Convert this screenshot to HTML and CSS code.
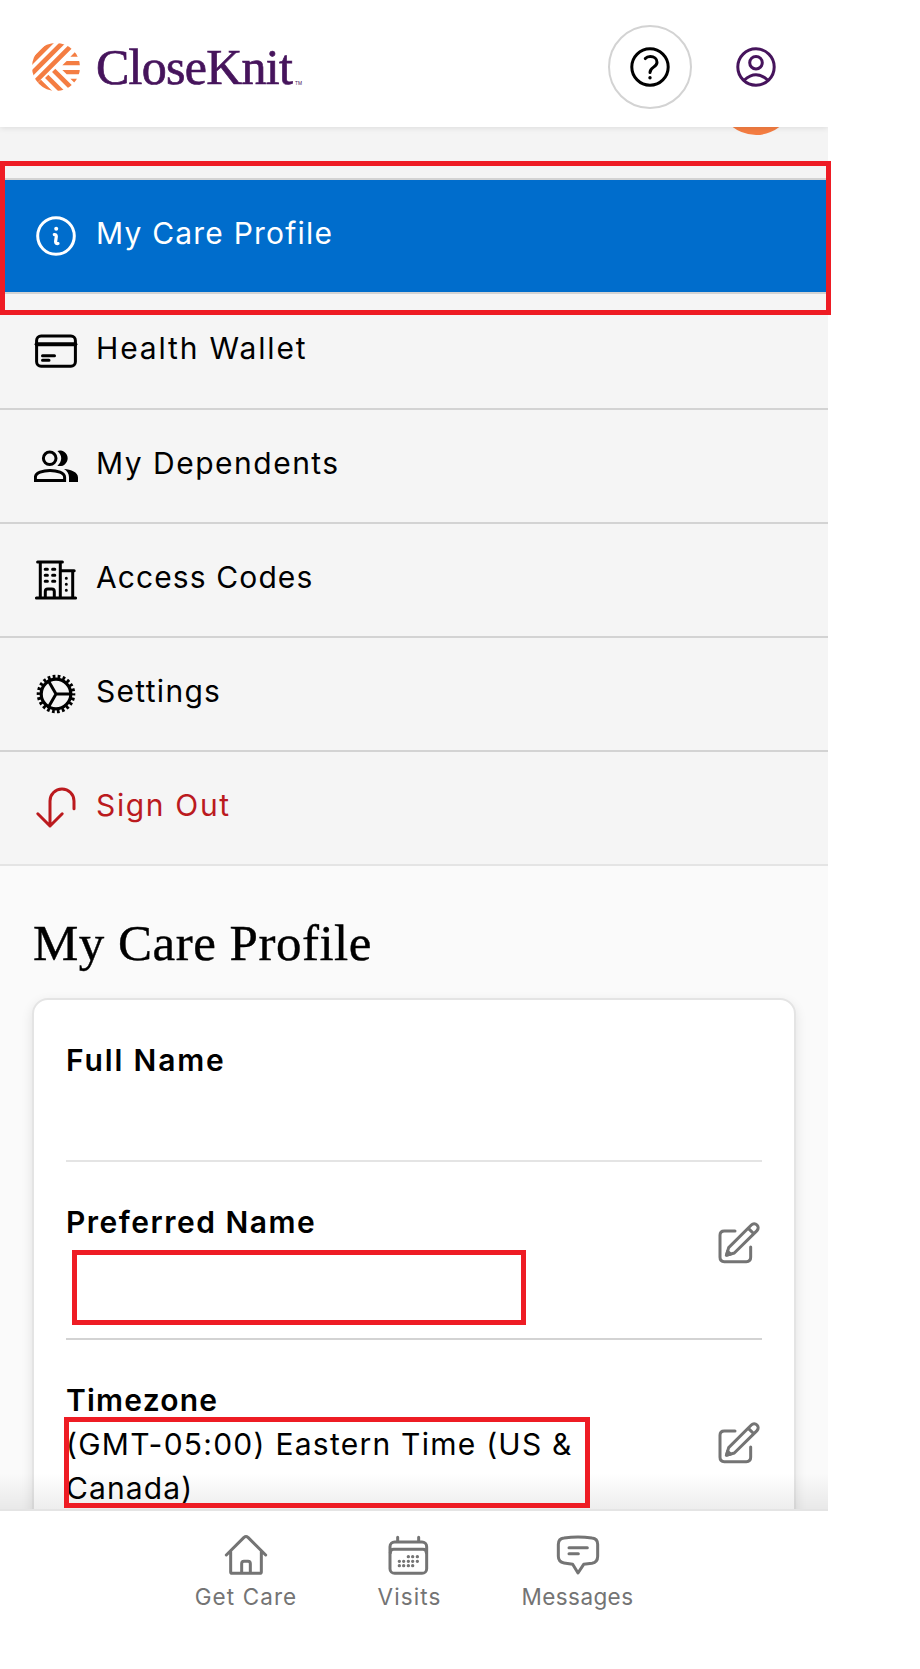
FILE: index.html
```html
<!DOCTYPE html>
<html lang="en">

<head>
  <meta charset="UTF-8">
  <meta name="viewport" content="width=device-width, initial-scale=1.0">
  <title>My Care Profile</title>
  <link rel="stylesheet" href="styles.css">
</head>

<body>
  <div class="app">
    <header class="header">
      <svg class="logoMark" viewBox="6 6 144 144">
        <clipPath id="ball"><circle cx="78" cy="78" r="72" /></clipPath>
        <g clip-path="url(#ball)">
          <path d="M0 68 L68 0 M0 103 L103 0 M8 130 L128 10 M71 88 L130 147 M50 106 L100 156 M28 121 L66 159" fill="none"
            stroke="#f47d42" stroke-width="14" />
          <path d="M97 73 L110 60 H152 V73z M97 87 H152 V100 H110z M121 47 L135 33 L152 47z M121 113 H152 L135 127z"
            fill="#f47d42" />
        </g>
      </svg>
      <div class="logoText">CloseKnit</div>
      <span class="logoTm">TM</span>
      <button class="helpBtn">
        <svg class="headerIcon" viewBox="0 0 40 40">
          <circle cx="20" cy="20" r="18.2" />
          <path d="M15.3 11.6C16.7 10 18.5 9.6 20.3 9.6C24.2 9.6 27 12 27 15.2C27 20.5 20 19.8 20 25.5" />
          <circle class="solid" cx="20" cy="30.7" r="1.7" />
        </svg>
      </button>
      <button class="userBtn">
        <svg class="headerIcon" viewBox="0 0 40 40">
          <circle cx="20" cy="20" r="18.2" />
          <circle cx="20" cy="15.7" r="6.3" />
          <path d="M8.3 33Q20 22.5 31.7 33" />
        </svg>
      </button>
    </header>

    <div class="avatarStrip">
      <div class="avatar"></div>
    </div>

    <nav class="menu">
      <a class="menuItem active">
        <svg class="menuIcon" viewBox="0 0 44 44">
          <circle cx="22" cy="22" r="18.3" />
          <circle class="solid" cx="22.2" cy="14.7" r="2" />
          <path class="thick" d="M20.3 20.6Q22.3 20.3 22.3 22.5L21.6 27.5Q21.6 29.8 24 29.5" />
        </svg>
        <span class="menuText t1">My Care Profile</span>
      </a>
      <a class="menuItem wallet">
        <svg class="menuIcon" viewBox="0 0 44 44">
          <rect x="2.6" y="6.9" width="38.8" height="30.4" rx="4.5" />
          <path d="M2.6 15.3H41.4" stroke-width="4" />
          <path d="M8.5 26.7H20.5M8.5 31.2H15" />
        </svg>
        <span class="menuText t2">Health Wallet</span>
      </a>
      <a class="menuItem">
        <svg class="menuIcon" viewBox="0 0 44 44">
          <circle cx="15.7" cy="14.3" r="6.3" />
          <path d="M1.4 36.6V33.2C1.4 29 9 26.4 16 26.4S30.6 29 30.6 33.2V36.6Z" stroke-linejoin="miter" />
          <path class="solid" d="M23.4 6.9A7.8 7.8 0 1 1 23.4 21.7Q27.2 18.5 27.2 14.3T23.4 6.9Z" />
          <path class="solid" d="M30 25C37 25.5 44 28 44 33.5V38H35V33.3C35 29.8 33 26.8 30 25Z" />
        </svg>
        <span class="menuText t3">My Dependents</span>
      </a>
      <a class="menuItem">
        <svg class="menuIcon" viewBox="0 0 44 44">
          <path d="M3.6 4H28.4M6.3 4V40M26.3 4V40M2.4 40H41.6M26.3 12.7H40.2M38.7 12.7V40M11.3 40V33.4Q11.3 31 13.7 31H17.9Q20.3 31 20.3 33.4V40" />
          <path d="M11.2 11.3h2.2M18.6 11.3h2.2M11.2 17.3h2.2M18.6 17.3h2.2M11.2 23.3h2.2M18.6 23.3h2.2" />
          <path d="M32.3 20.3h.01M32.3 26.3h.01M32.3 32.3h.01" stroke-width="3" />
        </svg>
        <span class="menuText t4">Access Codes</span>
      </a>
      <a class="menuItem">
        <svg class="menuIcon" viewBox="0 0 44 44">
          <circle cx="22" cy="22" r="14.8" stroke-width="3.2" />
          <circle cx="22" cy="22" r="17.3" stroke-width="4" stroke-linecap="butt" stroke-dasharray="2.7 2.241" stroke-dashoffset="1.35" />
          <path d="M22 22H37M22 22L14.5 9M22 22L14.5 35" />
        </svg>
        <span class="menuText t5">Settings</span>
      </a>
      <a class="menuItem signOut">
        <svg class="menuIcon" viewBox="0 0 44 44">
          <path d="M3.8 27.8L16 40L28.2 27.8M16 40V15A12 12 0 0 1 40 15V22.7" />
        </svg>
        <span class="menuText t6">Sign Out</span>
      </a>
    </nav>

    <main class="content">
      <h1 class="heading">My Care Profile</h1>
      <div class="card">
        <div class="row">
          <div class="field">
            <div class="label l1">Full Name</div>
            <div class="value"></div>
          </div>
        </div>
        <div class="row preferred">
          <div class="field">
            <div class="label l2">Preferred Name</div>
            <div class="value"></div>
          </div>
          <svg class="editIcon" viewBox="350 122 132 132">
            <path d="M404 155H372Q359 155 359 168V234Q359 247 372 247H438Q451 247 451 234V203" />
            <path d="M378 228L385 205L453 137A12 12 0 0 1 470 154L402 221ZM444 147L460 163" />
            <path d="M379 227L382 216L391 224Z" />
          </svg>
        </div>
        <div class="row">
          <div class="field">
            <div class="label l3">Timezone</div>
            <div class="value"><span class="v1">(GMT-05:00) Eastern Time (US &amp;</span><br><span class="v2">Canada)</span></div>
          </div>
          <svg class="editIcon" viewBox="350 122 132 132">
            <path d="M404 155H372Q359 155 359 168V234Q359 247 372 247H438Q451 247 451 234V203" />
            <path d="M378 228L385 205L453 137A12 12 0 0 1 470 154L402 221ZM444 147L460 163" />
            <path d="M379 227L382 216L391 224Z" />
          </svg>
        </div>
      </div>
      <div class="fade"></div>
    </main>

    <nav class="tabBar">
      <a class="tab tabCare">
        <svg class="tabIcon" viewBox="192 98 132 132">
          <path d="M199 164L252 111Q258 106 264 111L317 164M212 152V215Q212 219 216 219H300Q304 219 304 215V152M245 219V190Q245 183 252 183H264Q271 183 271 190V219" />
        </svg>
        <span>Get Care</span>
      </a>
      <a class="tab tabVisits">
        <svg class="tabIcon" viewBox="683 98 132 132">
          <rect x="689" y="125" width="110" height="94" rx="14" />
          <path d="M690 157Q690 147 700 147H788Q798 147 798 157M712 111V122M775 111V122" />
          <path d="M744 169h.1M757 169h.1M771 169h.1M717 183h.1M730 183h.1M744 183h.1M757 183h.1M771 183h.1M717 196h.1M730 196h.1M744 196h.1M757 196h.1" stroke-width="10" />
        </svg>
        <span>Visits</span>
      </a>
      <a class="tab tabMessages">
        <svg class="tabIcon" viewBox="1188 98 132 132">
          <path d="M1195 132Q1195 115 1212 113Q1254 107 1296 113Q1313 115 1313 132V168Q1313 186 1296 189L1271 192L1254 218L1238 192L1212 188Q1195 185 1195 168Z" />
          <path d="M1227 142H1282M1227 160H1255" />
        </svg>
        <span>Messages</span>
      </a>
    </nav>

    <!-- highlight boxes drawn over the page -->
    <div class="mark markMenu"></div>
    <div class="mark markName"></div>
    <div class="mark markTimezone"></div>
  </div>
</body>

</html>
```
FILE: styles.css
```css
* {
  box-sizing: border-box;
}

body {
  margin: 0;
  background: #ffffff;
  font-family: Inter, "Liberation Sans", sans-serif;
  color: #000000;
}

.app {
  position: relative;
  width: 828px;
  height: 1669px;
  display: flex;
  flex-direction: column;
}

svg {
  display: block;
  flex: none;
  fill: none;
  stroke: currentColor;
  stroke-linecap: round;
  stroke-linejoin: round;
}

.solid {
  fill: currentColor;
  stroke: none;
}

/* header */
.header {
  position: relative;
  z-index: 1;
  height: 127px;
  flex: none;
  display: flex;
  align-items: center;
  padding: 7px 52px 0 32px;
  background: #ffffff;
  box-shadow: 0 1px 6px rgba(0, 0, 0, 0.1);
  clip-path: inset(0 0 -10px 0);
}

.logoMark {
  width: 48px;
  height: 48px;
  stroke: none;
  stroke-linecap: butt;
}

.logoText {
  margin-left: 16px;
  font-family: "Liberation Serif", serif;
  font-size: 50px;
  line-height: 56px;
  letter-spacing: -0.75px;
  color: #46145c;
  -webkit-text-stroke: 0.7px #46145c;
  white-space: nowrap;
}

.logoTm {
  margin: 32px 0 0 3px;
  font-size: 4.5px;
  line-height: 5px;
  color: #46145c;
}

.helpBtn {
  width: 84px;
  height: 84px;
  margin-left: auto;
  padding: 0;
  display: flex;
  align-items: center;
  justify-content: center;
  background: none;
  border: 2px solid #d3d3d3;
  border-radius: 50%;
  color: #000000;
}

.userBtn {
  margin-left: 44px;
  padding: 0;
  border: none;
  background: none;
  color: #46145c;
}

.headerIcon {
  width: 40px;
  height: 40px;
  stroke-width: 3;
}

/* menu */
.avatarStrip {
  height: 53px;
  flex: none;
  overflow: hidden;
  background: #f4f4f4;
  border-bottom: 2px solid #d3d3d3;
}

.avatar {
  width: 76px;
  height: 76px;
  margin: -68px 34px 0 auto;
  border-radius: 50%;
  background: #f47d42;
}

.menuItem {
  height: 114px;
  display: flex;
  align-items: center;
  gap: 18px;
  padding-left: 34px;
  background: #f5f5f5;
  border-bottom: 2px solid #d3d3d3;
}

.menuItem.active {
  background: #006dcc;
  color: #ffffff;
}

.menuItem.wallet {
  height: 116px;
}

.menuItem.signOut {
  color: #bb1a1e;
  border-bottom-color: #e4e4e4;
}

.menuIcon {
  width: 44px;
  height: 44px;
  stroke-width: 3;
}

.thick {
  stroke-width: 3.2;
}

.menuText {
  font-size: 30px;
  line-height: 44px;
  margin-top: -6px;
  white-space: nowrap;
}

.t1 {
  letter-spacing: 1.2px;
}

.t2 {
  letter-spacing: 1.85px;
}

.t3 {
  letter-spacing: 1.5px;
}

.t4 {
  letter-spacing: 1.1px;
}

.t5 {
  letter-spacing: 1.3px;
}

.t6 {
  letter-spacing: 1.65px;
}

/* profile */
.content {
  position: relative;
  height: 643px;
  flex: none;
  overflow: hidden;
  padding: 0 32px;
  background: #fafafa;
}

.heading {
  height: 132px;
  margin: 0;
  padding: 47px 0 0 1px;
  font-family: "Liberation Serif", serif;
  font-size: 51px;
  font-weight: 400;
  line-height: 60px;
  letter-spacing: 0.5px;
  -webkit-text-stroke: 0.4px #000000;
  white-space: nowrap;
}

.card {
  padding: 0 32px;
  background: #ffffff;
  border: 2px solid #e4e4e4;
  border-radius: 16px;
  box-shadow: 0 4px 12px rgba(0, 0, 0, 0.1);
}

.row {
  display: flex;
  align-items: center;
  justify-content: space-between;
  padding: 38px 1px 34px 0;
  border-bottom: 2px solid #e4e4e4;
}

.row.preferred {
  padding-bottom: 50px;
  border-bottom-color: #d3d3d3;
}

.label,
.value {
  min-height: 44px;
  font-size: 30px;
  line-height: 44px;
  white-space: nowrap;
}

.label {
  font-weight: 600;
}

.l1 {
  letter-spacing: 1.85px;
}

.l2 {
  letter-spacing: 1.5px;
}

.l3 {
  letter-spacing: 1.2px;
}

.v1 {
  letter-spacing: 1.25px;
}

.v2 {
  letter-spacing: 1.1px;
}

.editIcon {
  width: 44px;
  height: 44px;
  margin-top: -4px;
  color: #747474;
  stroke-width: 9;
}

/* shade above the tab bar */
.fade {
  position: absolute;
  left: 0;
  right: 0;
  bottom: 0;
  height: 36px;
  background: linear-gradient(rgba(0, 0, 0, 0), rgba(0, 0, 0, 0.07));
}

/* tab bar */
.tabBar {
  flex: 1;
  display: flex;
  justify-content: center;
  gap: 82px;
  padding-top: 22px;
  border-top: 2px solid #e4e4e4;
  background: #ffffff;
  color: #747474;
}

.tab {
  display: flex;
  flex-direction: column;
  align-items: center;
  gap: 5px;
  font-size: 22.5px;
  line-height: 30px;
  white-space: nowrap;
}

.tabCare {
  width: 101px;
  letter-spacing: 1.1px;
}

.tabVisits {
  width: 62px;
  letter-spacing: 1.1px;
}

.tabMessages {
  width: 110px;
  letter-spacing: 0.4px;
}

.tabIcon {
  width: 44px;
  height: 44px;
  stroke-width: 9;
}

/* highlight boxes */
.mark {
  position: absolute;
  z-index: 2;
  border: 5px solid #ee1c24;
}

.markMenu {
  left: 0;
  top: 161px;
  width: 831px;
  height: 154px;
}

.markName {
  left: 72px;
  top: 1250px;
  width: 454px;
  height: 75px;
}

.markTimezone {
  left: 64px;
  top: 1417px;
  width: 526px;
  height: 91px;
}
```
